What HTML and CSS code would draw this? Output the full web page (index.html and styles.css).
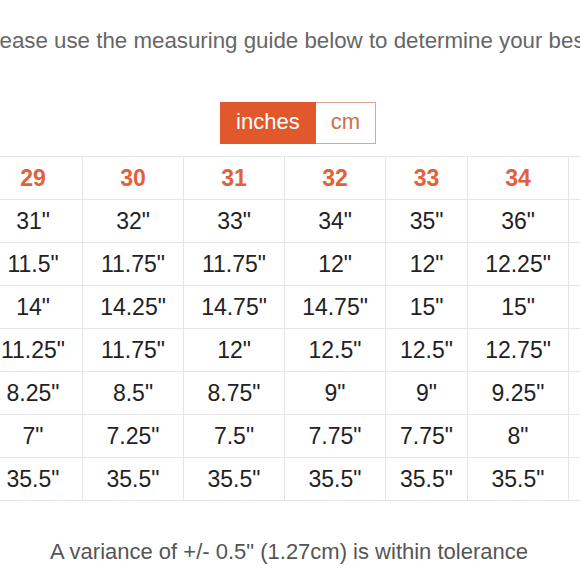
FILE: index.html
```html
<!DOCTYPE html>
<html lang="en">
<head>
<meta charset="utf-8">
<title>Size guide</title>
<link rel="stylesheet" href="styles.css">
</head>
<body>
<div class="viewport">
<div class="page">
  <p class="intro">Please use the measuring guide below to determine your best fit</p>
  <div class="toggle-row">
    <div class="toggle">
      <span class="unit active">inches</span>
      <span class="unit">cm</span>
    </div>
  </div>
  <div class="table-wrap">
    <table class="sizes">
      <colgroup>
        <col class="w99"><col class="w101"><col class="w101"><col class="w101"><col class="w82"><col class="w101"><col class="w30">
      </colgroup>
      <thead>
        <tr><th>29</th><th>30</th><th>31</th><th>32</th><th>33</th><th>34</th><th class="next"></th></tr>
      </thead>
      <tbody>
        <tr><td>31"</td><td>32"</td><td>33"</td><td>34"</td><td>35"</td><td>36"</td><td class="next"></td></tr>
        <tr><td>11.5"</td><td>11.75"</td><td>11.75"</td><td>12"</td><td>12"</td><td>12.25"</td><td class="next"></td></tr>
        <tr><td>14"</td><td>14.25"</td><td>14.75"</td><td>14.75"</td><td>15"</td><td>15"</td><td class="next"></td></tr>
        <tr><td>11.25"</td><td>11.75"</td><td>12"</td><td>12.5"</td><td>12.5"</td><td>12.75"</td><td class="next"></td></tr>
        <tr><td>8.25"</td><td>8.5"</td><td>8.75"</td><td>9"</td><td>9"</td><td>9.25"</td><td class="next"></td></tr>
        <tr><td>7"</td><td>7.25"</td><td>7.5"</td><td>7.75"</td><td>7.75"</td><td>8"</td><td class="next"></td></tr>
        <tr><td>35.5"</td><td>35.5"</td><td>35.5"</td><td>35.5"</td><td>35.5"</td><td>35.5"</td><td class="next"></td></tr>
      </tbody>
    </table>
  </div>
  <p class="note">A variance of +/- 0.5" (1.27cm) is within tolerance</p>
</div>
</div>
</body>
</html>
```
FILE: styles.css
```css
html, body {
  margin: 0;
  padding: 0;
  background: #ffffff;
}

body {
  font-family: "Liberation Sans", Arial, sans-serif;
}

.viewport {
  width: 580px;
  height: 580px;
  overflow: hidden;
  background: #ffffff;
}

.page {
  width: 680px;
  margin-left: -44px;
  padding-top: 28px;
}

.intro {
  margin: 0;
  font-size: 22.3px;
  line-height: 26px;
  color: #666666;
  text-align: center;
  white-space: nowrap;
  padding-left: 2px;
}

.toggle-row {
  display: flex;
  justify-content: center;
  margin-top: 48px;
  padding-left: 4px;
}

.toggle {
  display: flex;
  height: 42px;
  box-sizing: border-box;
  border: 1px solid #e0a58d;
}

.unit {
  display: flex;
  align-items: center;
  padding: 0 15px 2px;
  font-size: 22px;
  color: #cf6f4b;
  background: #ffffff;
}

.unit.active {
  background: #e1582c;
  color: #ffffff;
  margin: -1px 0 -1px -1px;
  padding-left: 16px;
  border-right: 1px solid #e1582c;
}

.table-wrap {
  margin-top: 12px;
  margin-left: 27px;
}

.sizes {
  border-collapse: collapse;
  table-layout: fixed;
  width: 615px;
}

.w99 { width: 99px; }
.w101 { width: 101px; }
.w82 { width: 82px; }
.w30 { width: 30px; }

.sizes th,
.sizes td {
  height: 43px;
  padding: 0;
  box-sizing: border-box;
  border: 1px solid #e6e6e6;
  text-align: center;
  vertical-align: middle;
  font-size: 23px;
  white-space: nowrap;
}

.sizes th {
  color: #e0613a;
  font-weight: bold;
}

.sizes td {
  color: #222222;
}

.sizes .next {
  border-right: 0;
  background: #ffffff;
}

.note {
  margin: 38px 0 0;
  font-size: 22px;
  line-height: 26px;
  color: #555555;
  text-align: center;
  padding-right: 14px;
}
```
